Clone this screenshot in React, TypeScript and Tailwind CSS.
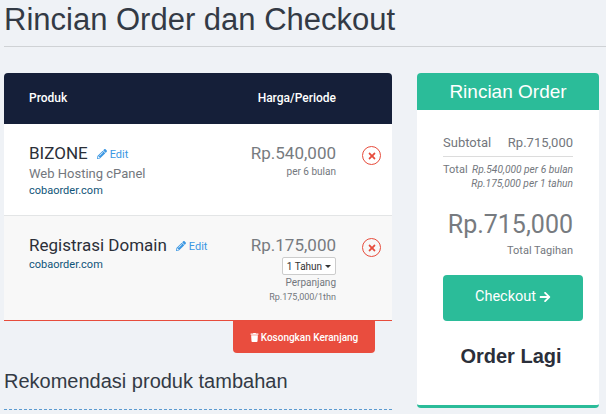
import React, { FC } from 'react';
import { FaPencilAlt, FaTimes, FaTrash, FaArrowRight } from 'react-icons/fa';

const roboto = "font-['Roboto',sans-serif]";
const helvetica = "font-['Liberation_Sans',sans-serif]";

const EditLink: FC = () => (
  <span className="flex items-center gap-[3px] text-[11px] text-[#3b97e3] leading-none">
    <FaPencilAlt size={10} />
    Edit
  </span>
);

const RemoveButton: FC = () => (
  <span className="flex items-center justify-center w-[19px] h-[19px] rounded-full border-[1.5px] border-[#e74c3c] text-[#e74c3c]">
    <FaTimes size={10} />
  </span>
);

const App: FC = () => {
  return (
    <div className={`${roboto} w-[606px] h-[414px] overflow-hidden bg-[#eff2f6] text-[#333a45]`}>
      <div className="flex">
        <div className="w-[392px] pl-[4px] shrink-0">
          <h1 className={`${helvetica} text-[31px] leading-[34px] pt-[3px] h-[46px] whitespace-nowrap text-[#333a45]`}>
            Rincian Order dan Checkout
          </h1>
          <div className="h-px bg-[#cfd2d5] w-[602px]" />

          <div className="mt-[26px] bg-[#151f39] rounded-t-[4px] h-[51px] flex items-center justify-between pl-[25px] pr-[56px] pb-[2px] text-[12px] font-medium text-white">
            <span>Produk</span>
            <span>Harga/Periode</span>
          </div>

          <div className="bg-white h-[92px] border-b border-[#e3e5e6] flex pl-[25px] pr-[11px] pt-[20px]">
            <div className="flex-1">
              <div className="flex items-center gap-[9px] h-[20px]">
                <span className="text-[17px] text-[#2b2f38]">BIZONE</span>
                <EditLink />
              </div>
              <div className="text-[13px] leading-[18px] mt-[1px] text-[#73777d]">Web Hosting cPanel</div>
              <div className="text-[11px] leading-[15px] text-[#0f5478]">cobaorder.com</div>
            </div>
            <div className="text-right pr-[26px] -mt-[1px]">
              <div className="text-[17px] leading-[21px] text-[#777b80]">Rp.540,000</div>
              <div className="text-[10px] leading-[14px] mt-[1px] text-[#73777d]">per 6 bulan</div>
            </div>
            <div className="pt-[2px]"><RemoveButton /></div>
          </div>

          <div className="bg-[#f8f8f8] h-[105px] border-b border-[#e74c3c] flex pl-[25px] pr-[11px] pt-[20px]">
            <div className="flex-1">
              <div className="flex items-center gap-[9px] h-[20px]">
                <span className="text-[17px] text-[#2b2f38]">Registrasi Domain</span>
                <EditLink />
              </div>
              <div className="text-[11px] leading-[15px] mt-[1px] text-[#0f5478]">cobaorder.com</div>
            </div>
            <div className="text-right pr-[26px] -mt-[1px] flex flex-col items-end">
              <div className="text-[17px] leading-[21px] text-[#777b80]">Rp.175,000</div>
              <div className="mt-[1px] w-[54px] h-[18px] bg-white border border-[#cccccc] rounded-[2px] flex items-center justify-center gap-[3px] text-[10px] text-[#333]">
                1 Tahun
                <span className="w-0 h-0 border-x-[3px] border-x-transparent border-t-[3px] border-t-[#333]" />
              </div>
              <div className="text-[10px] leading-[14px] mt-[1px] text-[#73777d]">Perpanjang</div>
              <div className="text-[9px] leading-[13px] mt-[1px] text-[#73777d]">Rp.175,000/1thn</div>
            </div>
            <div className="pt-[2px]"><RemoveButton /></div>
          </div>

          <div className="flex justify-end pr-[17px]">
            <div className="w-[142px] h-[32px] bg-[#e94d3e] rounded-b-[4px] flex items-center justify-center gap-[2px] text-[10px] font-medium text-white">
              <FaTrash size={9} />
              Kosongkan Keranjang
            </div>
          </div>

          <h2 className={`${helvetica} text-[20px] leading-[22px] mt-[17px] text-[#333a45]`}>
            Rekomendasi produk tambahan
          </h2>
          <div className="mt-[17px] border-t border-dashed border-[#5b9bd0]" />
        </div>

        <div className="ml-[25px] mt-[73px] w-[182px] h-[335px] bg-white rounded-[4px] border-b-[3px] border-[#2bbc99] flex flex-col shrink-0">
          <div className={`${helvetica} bg-[#2bbc99] rounded-t-[4px] h-[37px] pt-[1px] flex items-center justify-center text-[19px] text-white`}>
            Rincian Order
          </div>
          <div className="pl-[26px] pr-[26px] pt-[25px]">
            <div className="flex justify-between border-b border-[#dcdcdc] h-[22px] text-[13px] leading-[16px] text-[#73777d]">
              <span>Subtotal</span>
              <span>Rp.715,000</span>
            </div>
            <div className="flex justify-between mt-[6px] text-[#73777d]">
              <span className="text-[11px] leading-[14px]">Total</span>
              <span className="text-[10.2px] leading-[14px] italic text-right whitespace-nowrap">
                Rp.540,000 per 6 bulan<br />Rp.175,000 per 1 tahun
              </span>
            </div>
            <div className="mt-[18px] text-right text-[25px] leading-[32px] text-[#777b80]">Rp.715,000</div>
            <div className="text-right text-[11px] leading-[14px] mt-[3px] text-[#73777d]">Total Tagihan</div>
          </div>
          <div className="pl-[26px] pr-[16px] mt-[17px]">
            <div className="h-[46px] bg-[#2bbc99] rounded-[4px] flex items-center justify-center gap-[3px] pb-[2px] text-[14.5px] text-white">
              Checkout
              <FaArrowRight size={12} />
            </div>
          </div>
          <div className={`${helvetica} mt-[24px] pl-[6px] text-center text-[20px] leading-[23px] font-bold text-[#2b2f3a]`}>Order Lagi</div>
        </div>
      </div>
    </div>
  );
};

export default App;
